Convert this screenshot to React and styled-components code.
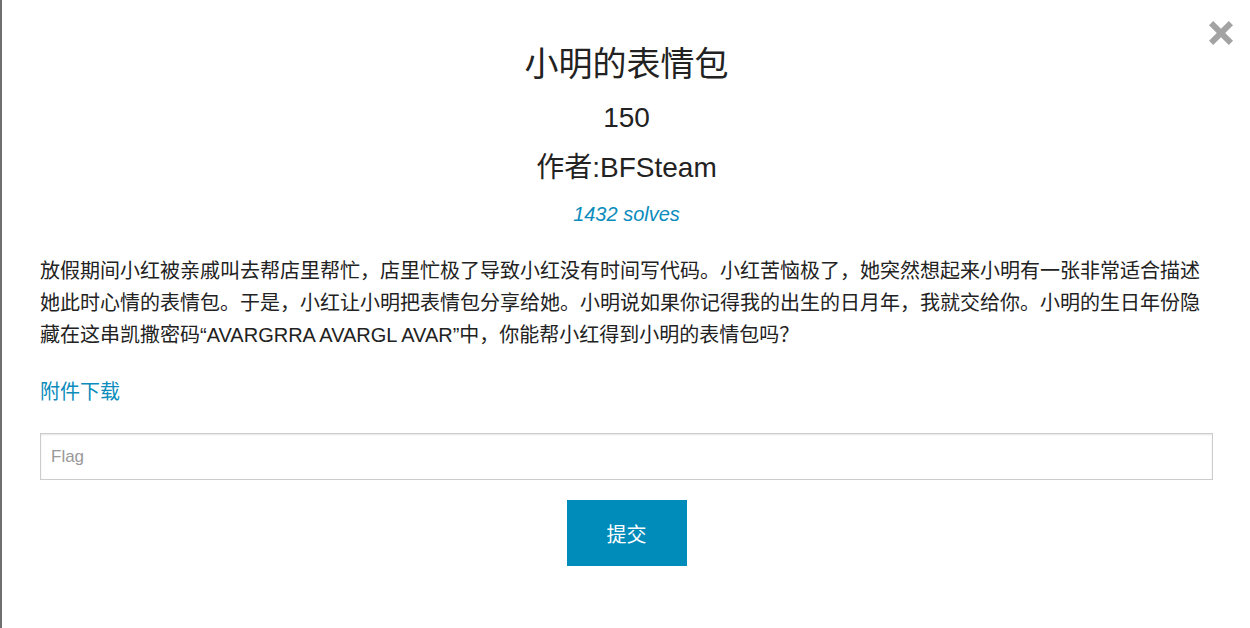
import React from "react";
import styled, { createGlobalStyle } from "styled-components";

const GlobalStyle = createGlobalStyle`
  html, body {
    margin: 0;
    padding: 0;
    background: #fff;
  }
  body {
    font-family: "Liberation Sans", "Noto Sans CJK SC", sans-serif;
    color: #222;
  }
  * { box-sizing: border-box; }
`;

const Modal = styled.div`
  position: relative;
  min-height: 628px;
  border-left: 2px solid #707070;
  background: #fff;
  padding: 44px 37px 0 38px;
`;

const CloseButton = styled.button`
  position: absolute;
  top: 21px;
  right: 17px;
  width: 24px;
  height: 24px;
  padding: 0;
  border: none;
  background: transparent;
  cursor: pointer;
  display: flex;
`;

const Header = styled.div`
  text-align: center;
`;

const Title = styled.h3`
  margin: 0;
  font-size: 34px;
  line-height: 40px;
  font-weight: 400;
  color: #222;
`;

const SubHeading = styled.h4`
  margin: ${(p) => p.$gap}px 0 0;
  font-size: 28px;
  line-height: 34px;
  font-weight: 400;
  color: #222;
`;

const Solves = styled.div`
  margin-top: 17px;
  font-size: 20px;
  line-height: 24px;
  font-style: italic;
  color: #0a8cbc;
`;

const Description = styled.p`
  margin: 29px 0 0;
  font-size: 20px;
  line-height: 32px;
  color: #222;
`;

const DownloadLink = styled.a`
  display: inline-block;
  margin-top: 25px;
  font-size: 20px;
  line-height: 32px;
  color: #0a8cbc;
  text-decoration: none;
`;

const FlagInput = styled.input`
  display: block;
  width: 100%;
  height: 47px;
  margin-top: 25px;
  padding: 0 10px;
  border: 1px solid #cccccc;
  box-shadow: inset 0 1px 2px rgba(0, 0, 0, 0.1);
  font-family: "Liberation Sans", "Noto Sans CJK SC", sans-serif;
  font-size: 17px;
  color: #333;
  outline: none;
  &::placeholder {
    color: #999;
  }
`;

const ButtonRow = styled.div`
  display: flex;
  justify-content: center;
  margin-top: 20px;
`;

const SubmitButton = styled.button`
  width: 120px;
  height: 66px;
  border: none;
  background: #008cba;
  color: #fff;
  font-family: "Liberation Sans", "Noto Sans CJK SC", sans-serif;
  font-size: 20px;
  cursor: pointer;
`;

const CloseIcon = () => (
  <svg width="24" height="24" viewBox="0 0 24 24">
    <path
      d="M4.2 0 L12 7.8 L19.8 0 L24 4.2 L16.2 12 L24 19.8 L19.8 24 L12 16.2 L4.2 24 L0 19.8 L7.8 12 L0 4.2 Z"
      fill="#a3a3a3"
    />
  </svg>
);

export default function App() {
  return (
    <>
      <GlobalStyle />
      <Modal>
        <CloseButton aria-label="close">
          <CloseIcon />
        </CloseButton>
        <Header>
          <Title>小明的表情包</Title>
          <SubHeading $gap={17}>150</SubHeading>
          <SubHeading $gap={16}>作者:BFSteam</SubHeading>
          <Solves>1432 solves</Solves>
        </Header>
        <Description>
          放假期间小红被亲戚叫去帮店里帮忙，店里忙极了导致小红没有时间写代码。小红苦恼极了，她突然想起来小明有一张非常适合描述她此时心情的表情包。于是，小红让小明把表情包分享给她。小明说如果你记得我的出生的日月年，我就交给你。小明的生日年份隐藏在这串凯撒密码“AVARGRRA AVARGL AVAR”中，你能帮小红得到小明的表情包吗？
        </Description>
        <DownloadLink href="#">附件下载</DownloadLink>
        <FlagInput placeholder="Flag" />
        <ButtonRow>
          <SubmitButton>提交</SubmitButton>
        </ButtonRow>
      </Modal>
    </>
  );
}
